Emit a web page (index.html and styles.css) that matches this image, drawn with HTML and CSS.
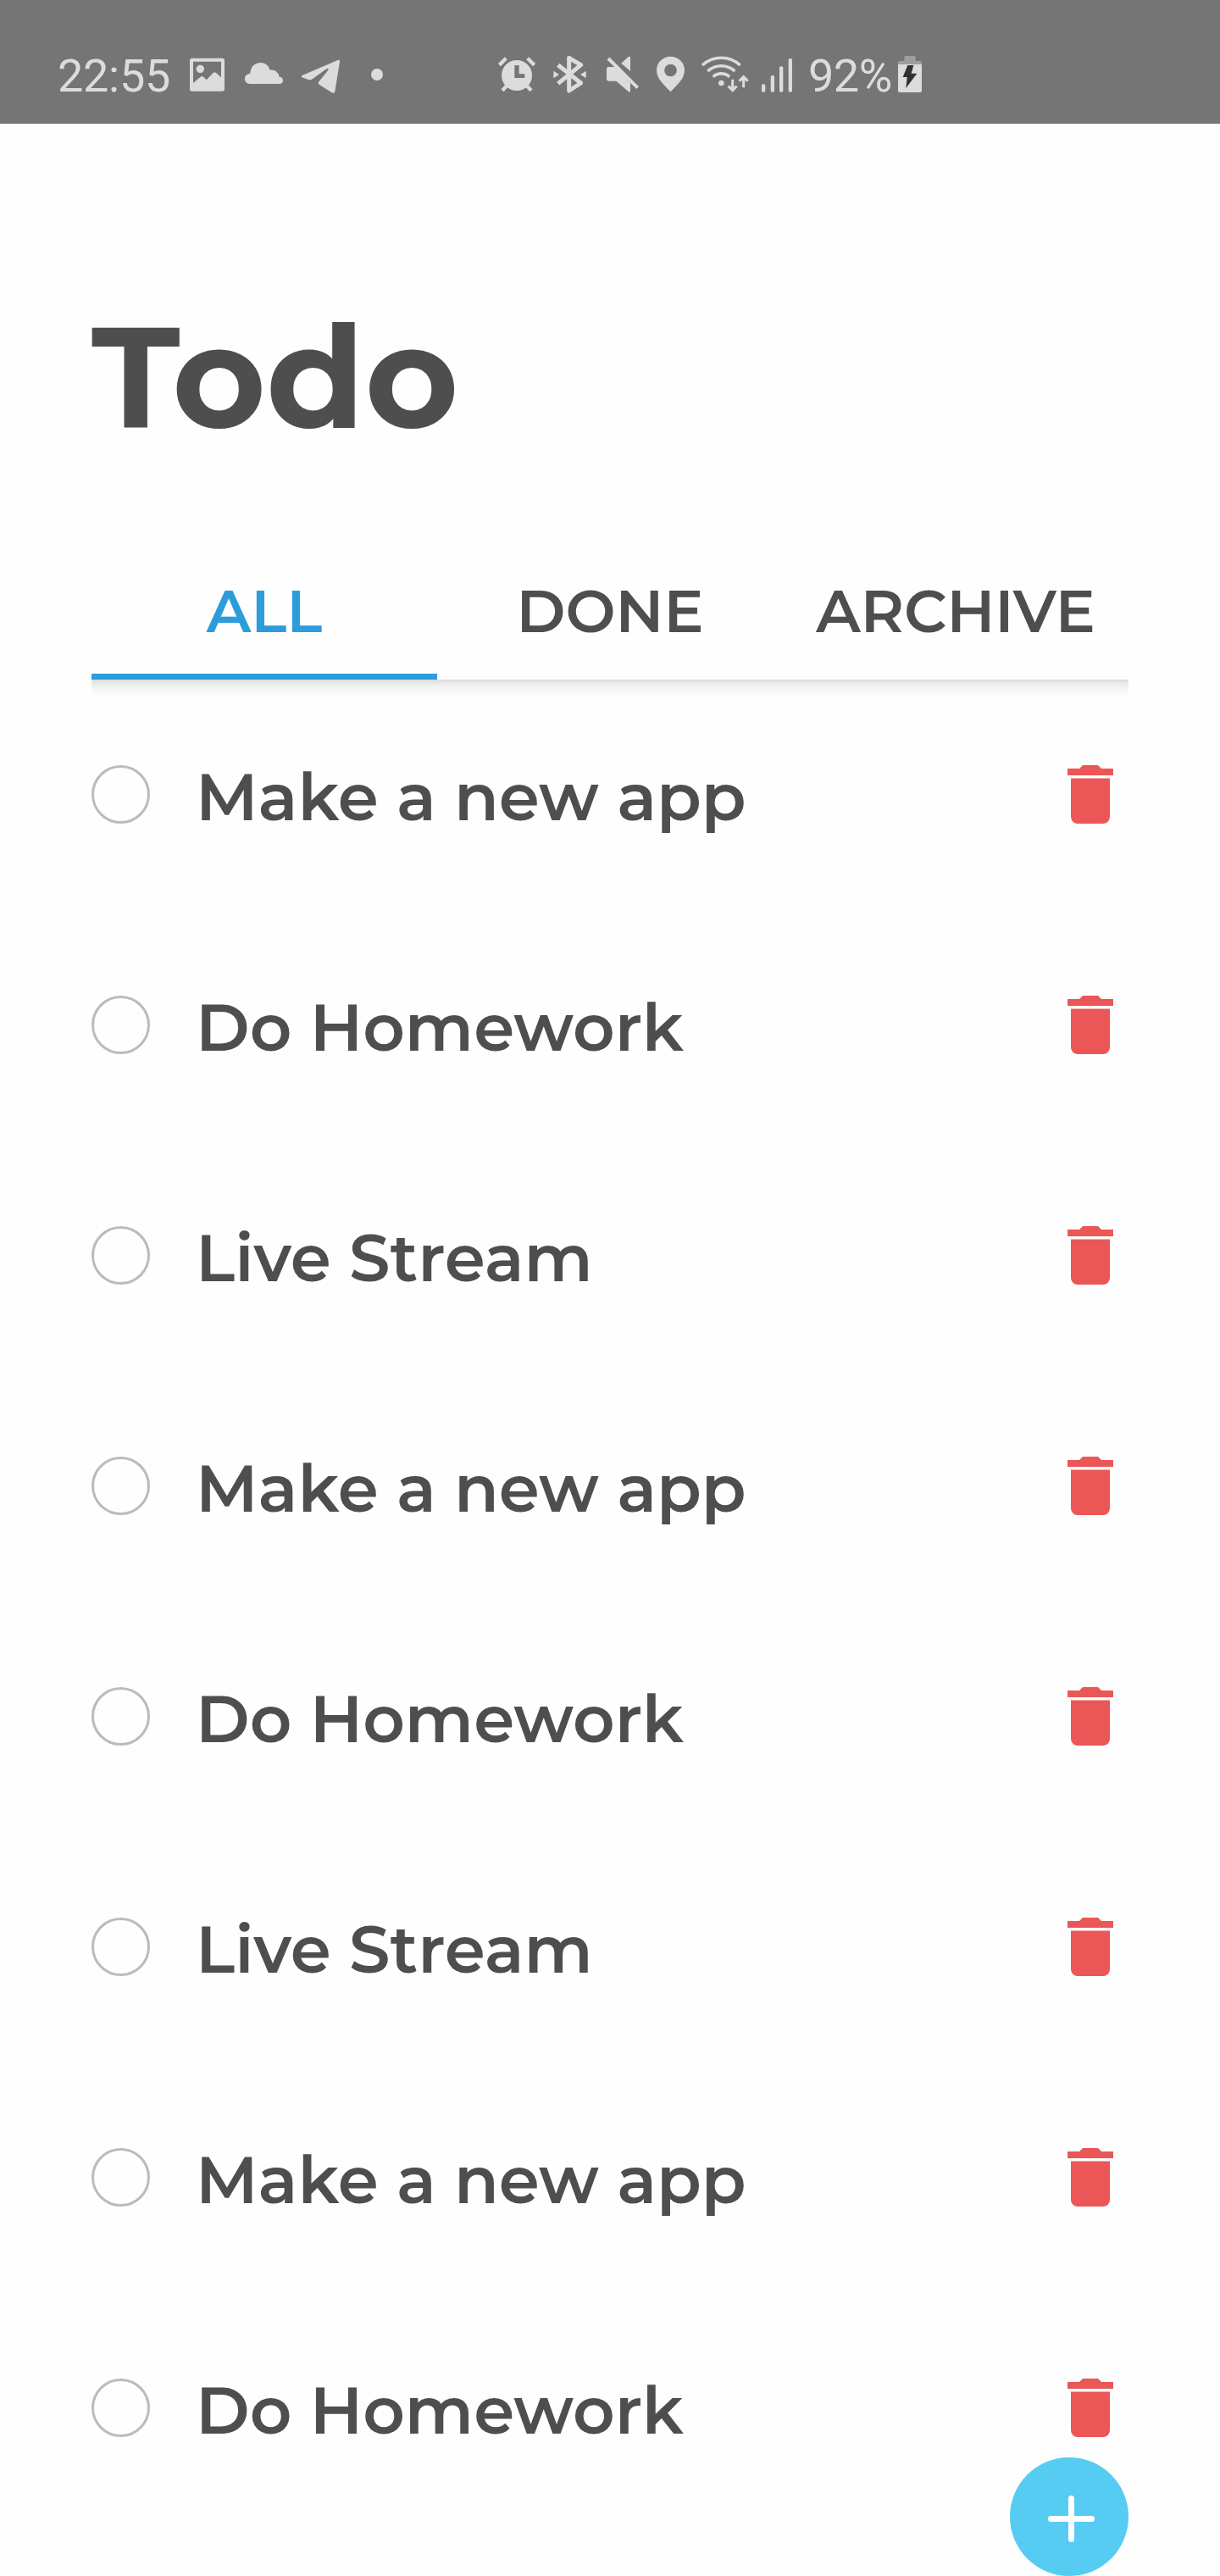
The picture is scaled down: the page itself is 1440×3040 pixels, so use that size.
FILE: index.html
```html
<!DOCTYPE html>
<html lang="en">
<head>
<meta charset="utf-8">
<title>Todo</title>
<link rel="stylesheet" href="styles.css">
</head>
<body>
<svg class="defs" width="0" height="0">
  <symbol id="trash" viewBox="0 0 54 69">
    <path d="M0 4h14l4-4h18l4 4h14v8H0zM4 15.500h46V61a8 8 0 0 1-8 8H12a8 8 0 0 1-8-8z"/>
  </symbol>
</svg>
<header class="status">
  <span class="status-text time">22:55</span>
  <svg class="photo" width="41" height="46" viewBox="552 75 123 138"><path fill-rule="evenodd" d="M560 86h107q8 0 8 8v101q0 8-8 8H560q-8 0-8-8V94q0-8 8-8zM564 98v76l26-22q5-4 10 0l11 11 24-25q5-4 10 0l18 16V98z"/><circle cx="589" cy="124" r="14"/></svg>
  <svg class="cloud" width="45" height="46" viewBox="747 75 135 138"><path d="M764 177a17 17 0 0 1-17-18c0-11 8-18 19-19 1-23 16-38 36-38 17 0 29 10 34 26 17-2 31 8 33 24 8 0 13 6 13 12 0 8-5 13-13 13z"/></svg>
  <svg class="plane" width="45" height="46" viewBox="948 75 135 138"><path d="M950 147l126-54c5-2 8 1 7 6l-17 104c-1 6-6 8-11 5l-44-28c-5-3-5-8-1-12l31-38c5-6 0-9-7-5l-47 34c-5 4-9 5-15 3l-20-7c-5-2-6-6-2-8z"/></svg>
  <svg class="dot" width="14" height="46" viewBox="1194 75 42 138"><circle cx="1215" cy="144" r="21"/></svg>
  <svg class="alarm" width="44" height="46" viewBox="84 75 132 138"><path fill-rule="evenodd" d="M150 93a54 54 0 1 1 0 108a54 54 0 1 1 0-108zM142 111v45h36v-14h-20v-31z"/><path class="line" stroke-width="13" d="M88 110l24-24M212 110l-24-24M99 200l16-17M201 200l-16-17"/></svg>
  <svg class="bluetooth" width="39" height="46" viewBox="279 75 117 138"><path class="line" stroke-width="15" stroke-linejoin="round" d="M296 110l81 64-42 27V85l42 25-81 66"/><path d="M280 131l20 13-20 13zM395 131l-20 13 20 13z"/></svg>
  <svg class="mute" width="38" height="46" viewBox="468 75 114 138"><path d="M520 104l25-23q7-4 7 4v47zM475 117h22l55 56v28q0 8-7 3l-43-37h-27q-7 0-7-7v-36q0-7 7-7z"/><path class="line" stroke-width="12" d="M474 87l104 104"/></svg>
  <svg class="pin" width="33" height="46" viewBox="645 75 99 138"><path fill-rule="evenodd" d="M694.500 80C667 80 645 101 645 128c0 32 28 53 49.500 77C716 181 744 160 744 128c0-27-22-48-49.500-48zM694.500 107a22 22 0 1 1 0 44a22 22 0 1 1 0-44z"/></svg>
  <svg class="wifi" width="56" height="46" viewBox="24 75 168 138"><path class="line" stroke-width="11" d="M27 111C65 76 123 76 161 111M46 132c27-25 69-25 96 0M65 152c17-15 41-15 58 0"/><circle cx="94" cy="174" r="10"/><path class="line" stroke-width="9" d="M134 161v39M119 185l15 15 15-15M173 190v-38M158 167l15-15 15 15"/></svg>
  <svg class="signal" width="36" height="46" viewBox="237 75 108 138"><rect x="237" y="178" width="13" height="28" rx="5"/><rect x="269" y="147" width="13" height="59" rx="5"/><rect x="300" y="115" width="13" height="91" rx="5"/><rect x="332" y="87" width="13" height="119" rx="5"/></svg>
  <span class="status-text percent">92%</span>
  <svg class="battery" width="28" height="46" viewBox="720 75 84 138"><path class="battery-cap" d="M720 108v-6q0-6 6-6h16V83q0-5 5-5h30q5 0 5 5v13h16q6 0 6 6v6z"/><path d="M720 108h84v93q0 6-6 6h-72q-6 0-6-6z"/><path class="bolt" d="M754 111h21l-8 29h20l-39 52 4-39h-15z"/></svg>
</header>

<main class="page">
  <h1 class="title">Todo</h1>
  <nav class="tabs">
    <a class="tab active">ALL</a>
    <a class="tab">DONE</a>
    <a class="tab">ARCHIVE</a>
  </nav>
  <ul class="list">
    <li class="item"><span class="check"></span><span class="label">Make a new app</span><svg class="trash" width="54" height="69"><use href="#trash"/></svg></li>
    <li class="item"><span class="check"></span><span class="label">Do Homework</span><svg class="trash" width="54" height="69"><use href="#trash"/></svg></li>
    <li class="item"><span class="check"></span><span class="label">Live Stream</span><svg class="trash" width="54" height="69"><use href="#trash"/></svg></li>
    <li class="item"><span class="check"></span><span class="label">Make a new app</span><svg class="trash" width="54" height="69"><use href="#trash"/></svg></li>
    <li class="item"><span class="check"></span><span class="label">Do Homework</span><svg class="trash" width="54" height="69"><use href="#trash"/></svg></li>
    <li class="item"><span class="check"></span><span class="label">Live Stream</span><svg class="trash" width="54" height="69"><use href="#trash"/></svg></li>
    <li class="item"><span class="check"></span><span class="label">Make a new app</span><svg class="trash" width="54" height="69"><use href="#trash"/></svg></li>
    <li class="item"><span class="check"></span><span class="label">Do Homework</span><svg class="trash" width="54" height="69"><use href="#trash"/></svg></li>
  </ul>
</main>
<button class="add" aria-label="Add"><svg width="140" height="140" viewBox="0 0 140 140"><path d="M72.500 48.500v48M48.500 72.500h48"/></svg></button>
</body>
</html>
```
FILE: styles.css
```css
* { box-sizing: border-box; }

body {
  margin: 0;
  position: relative;
  height: 3040px;
  overflow: hidden;
  background: #fefefe;
  color: #4e4e4e;
  font-family: Montserrat, Inter, sans-serif;
}

svg { display: block; flex: none; }
.defs { position: absolute; }

/* Status bar */
.status {
  display: flex;
  align-items: flex-start;
  height: 146px;
  padding: 65px 0 0 68px;
  background: #757575;
  color: #dcdcdc;
  fill: #dcdcdc;
}
.status-text {
  flex: none;
  font: 400 54px/50px Roboto, sans-serif;
  white-space: nowrap;
}
.time { width: 156px; letter-spacing: -0.3px; }
.percent { width: 106px; margin-left: 19px; letter-spacing: -0.5px; }
.line { fill: none; stroke: #dcdcdc; }
.cloud { margin-left: 24px; }
.plane { margin-left: 22px; }
.dot { margin-left: 37px; }
.alarm { margin-left: 136px; }
.bluetooth { margin-left: 21px; }
.mute { margin-left: 24px; }
.pin { margin-left: 21px; }
.wifi { margin-left: 20px; }
.signal { margin-left: 15px; }
.battery-cap { fill: #9e9e9e; }
.bolt { fill: #303030; }

/* Content */
.page { padding: 0 108px; }
.title {
  margin: 198px 0 0;
  font-size: 169px;
  font-weight: 700;
  line-height: 200px;
}
.tabs {
  display: grid;
  grid-template-columns: repeat(3, 1fr);
  grid-template-rows: 161px;
  height: 161px;
  margin-top: 97px;
}
.tab {
  border-bottom: 7px solid transparent;
  font-size: 70.2px;
  font-weight: 600;
  line-height: 160px;
  text-align: center;
  height: 161px;
}
.active { border-color: #2d9cdb; color: #2d9cdb; }

.list {
  margin: 0;
  padding: 0;
  list-style: none;
  background: linear-gradient(#dadada 0, #e9e9e9 4px, #f3f3f3 9px, #fafafa 15px, #fefefe 23px) no-repeat 0 0 / 100% 23px;
}
.item {
  display: flex;
  height: 272px;
  padding: 101px 18px 0 0;
}
.check {
  flex: none;
  width: 69px;
  height: 69px;
  border: 3px solid #bbb;
  border-radius: 50%;
}
.label {
  margin-left: 54px;
  font-size: 77.1px;
  font-weight: 600;
  line-height: 74px;
  white-space: nowrap;
}
.trash { margin-left: auto; fill: #eb5757; }

.add {
  position: absolute;
  left: 1192px;
  top: 2900px;
  width: 140px;
  height: 140px;
  padding: 0;
  border: 0;
  border-radius: 50%;
  background: #56ccf2;
}
.add path { fill: none; stroke: #fff; stroke-width: 7px; stroke-linecap: round; }
```
